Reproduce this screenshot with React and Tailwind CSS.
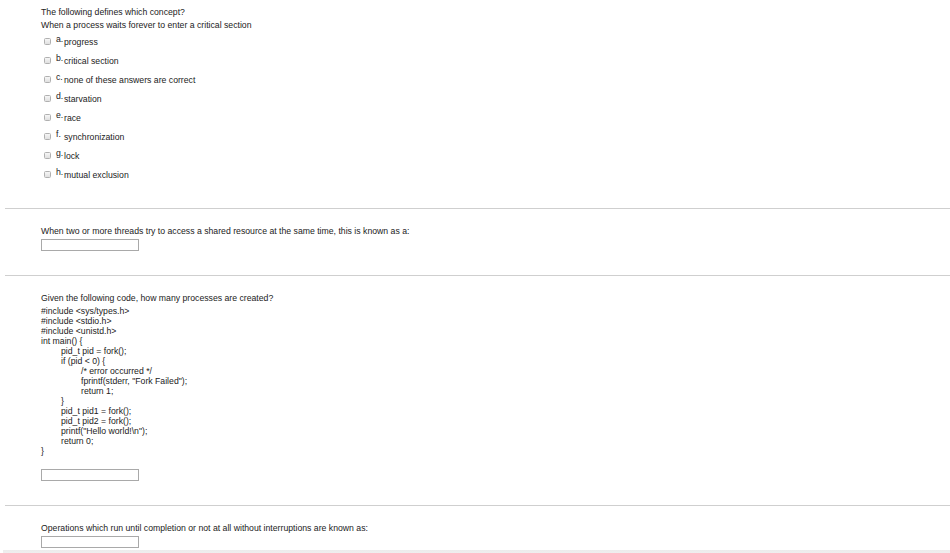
import React from "react";

const options = [
  ["a.", "progress"],
  ["b.", "critical section"],
  ["c.", "none of these answers are correct"],
  ["d.", "starvation"],
  ["e.", "race"],
  ["f.", "synchronization"],
  ["g.", "lock"],
  ["h.", "mutual exclusion"],
];

const code = [
  [0, "#include <sys/types.h>"],
  [0, "#include <stdio.h>"],
  [0, "#include <unistd.h>"],
  [0, "int main() {"],
  [1, "pid_t pid = fork();"],
  [1, "if (pid < 0) {"],
  [2, "/* error occurred */"],
  [2, 'fprintf(stderr, "Fork Failed");'],
  [2, "return 1;"],
  [1, "}"],
  [1, "pid_t pid1 = fork();"],
  [1, "pid_t pid2 = fork();"],
  [1, 'printf("Hello world!\\n");'],
  [1, "return 0;"],
  [0, "}"],
];

function Input() {
  return (
    <div className="w-[98px] h-[12px] border border-[#a9a9a9] bg-white" />
  );
}

function Sep() {
  return <div className="h-px bg-[#cfcfcf]" />;
}

export default function App() {
  return (
    <div
      className="w-[950px] h-[553px] overflow-hidden bg-white text-[#222] text-[8.7px]"
      style={{ fontFamily: '"Liberation Sans", Arial, sans-serif' }}
    >
      <div className="pl-[5px]">
        {/* Q1 */}
        <div className="pl-[36px] pt-[6px] pb-[23px]">
          <div className="leading-[13px] h-[13px]">The following defines which concept?</div>
          <div className="leading-[13px] h-[13px]">
            When a process waits forever to enter a critical section
          </div>
          <div className="mt-[1px]">
            {options.map(([l, t]) => (
              <div key={l} className="flex h-[19px] leading-[19px]">
                <div className="ml-[3px] mt-[5px] w-[7px] h-[7px] rounded-[1.5px] border border-[#b0b0b0] bg-gradient-to-b from-[#f6f6f6] to-[#e0e0e0]" />
                <span className="ml-[5px] w-[8px] -mt-[3px]">{l}</span>
                <span>{t}</span>
              </div>
            ))}
          </div>
        </div>
        <Sep />
        {/* Q2 */}
        <div className="pl-[36px] pt-[16px] pb-[24px]">
          <div className="leading-[13px] h-[13px]">
            When two or more threads try to access a shared resource at the same time, this is known as a:
          </div>
          <div className="mt-[1px]">
            <Input />
          </div>
        </div>
        <Sep />
        {/* Q3 */}
        <div className="pl-[36px] pt-[16px] pb-[24px]">
          <div className="leading-[13px] h-[13px]">
            Given the following code, how many processes are created?
          </div>
          <div className="mt-[1px]">
            {code.map(([ind, t], i) => (
              <div
                key={i}
                className={
                  "leading-[10px] h-[10px] whitespace-pre " +
                  (ind === 0 ? "pl-0" : ind === 1 ? "pl-[20px]" : "pl-[40px]")
                }
              >
                {t}
              </div>
            ))}
          </div>
          <div className="mt-[13px]">
            <Input />
          </div>
        </div>
        <Sep />
        {/* Q4 */}
        <div className="pl-[36px] pt-[16px]">
          <div className="leading-[13px] h-[13px]">
            Operations which run until completion or not at all without interruptions are known as:
          </div>
          <div className="mt-[1px]">
            <Input />
          </div>
        </div>
      </div>
      <div className="ml-[3px] mt-[2px] h-[10px] bg-gradient-to-b from-[#ececec] to-[#f6f6f6]" />
    </div>
  );
}
